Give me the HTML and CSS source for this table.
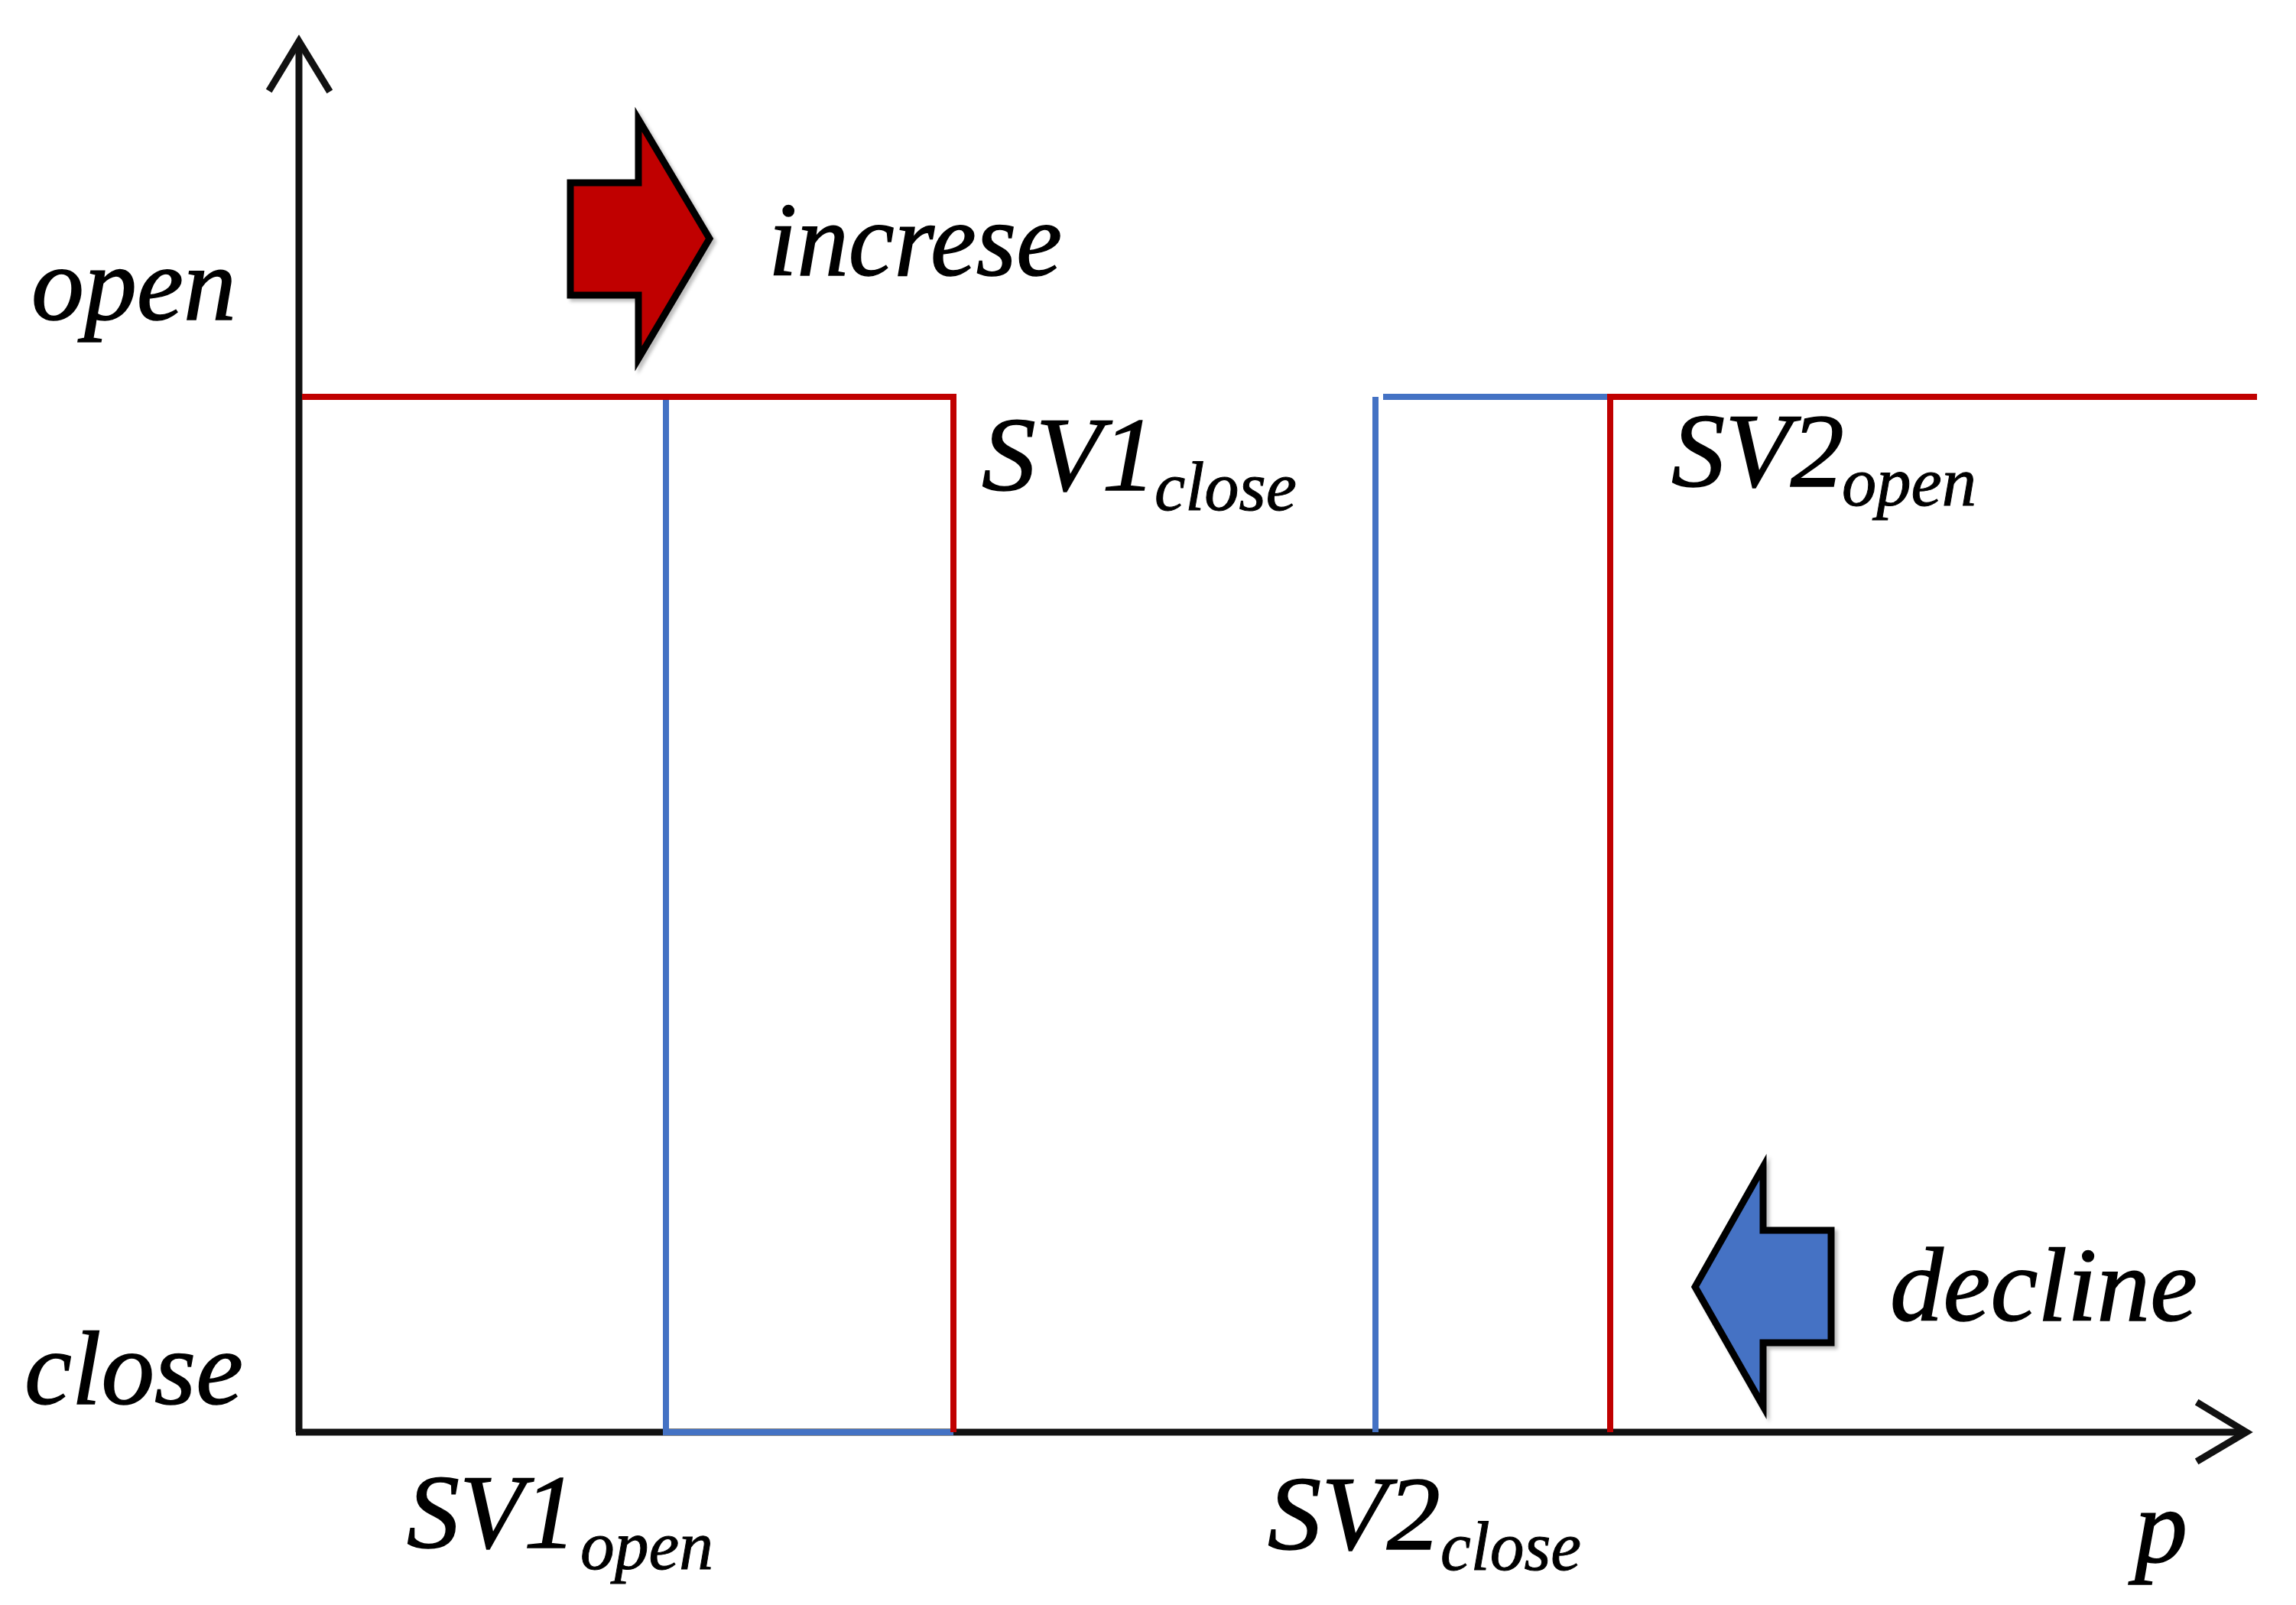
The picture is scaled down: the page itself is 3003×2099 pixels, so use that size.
FILE: index.html
```html
<!DOCTYPE html>
<html lang="en">
<head>
<meta charset="utf-8">
<title>Valve switching diagram</title>
<link rel="stylesheet" href="styles.css">
</head>
<body>
<main class="canvas">
<svg class="chart" viewBox="0 0 3003 2099" width="3003" height="2099" xmlns="http://www.w3.org/2000/svg">
  <defs>
    <filter id="shade" x="-10%" y="-10%" width="130%" height="130%">
      <feDropShadow dx="4" dy="4" stdDeviation="2" flood-color="#000000" flood-opacity="0.25"/>
    </filter>
  </defs>
  <!-- axes -->
  <line class="axis" x1="391" y1="1873" x2="391" y2="54"/>
  <polyline class="axis-head" points="354,115 391,54 429,116"/>
  <line class="axis" x1="387" y1="1873" x2="2938" y2="1873"/>
  <polyline class="axis-head" points="2877,1836 2938,1873 2877,1909"/>

  <!-- blue (decline) path -->
  <polyline class="blue" points="871,519 871,1873 1247,1873"/>
  <line class="blue" x1="1799" y1="519" x2="1799" y2="1873"/>
  <line class="blue" x1="1809" y1="519" x2="2106" y2="519"/>

  <!-- red (increase) path -->
  <polyline class="red" points="395,519 1247,519 1247,1873"/>
  <polyline class="red" points="2106,1873 2106,519 2952,519"/>

  <!-- direction arrows -->
  <polygon class="arrow-red" filter="url(#shade)" points="746,239 835,239 835,156 928,312 835,469 835,386 746,386"/>
  <polygon class="arrow-blue" filter="url(#shade)" points="2395,1609 2306,1609 2306,1526 2217,1683 2306,1839 2306,1756 2395,1756"/>

  <!-- labels -->
  <text class="lbl" x="41" y="418" textLength="268" lengthAdjust="spacingAndGlyphs">open</text>
  <text class="lbl" x="32" y="1836" textLength="286" lengthAdjust="spacingAndGlyphs">close</text>
  <text class="lbl" x="1005" y="360" textLength="384" lengthAdjust="spacingAndGlyphs">increse</text>
  <text class="lbl" x="2472" y="1727" textLength="402" lengthAdjust="spacingAndGlyphs">decline</text>
  <text class="lbl" x="2792" y="2043">p</text>

  <text class="lbl" x="1284" y="641" textLength="228" lengthAdjust="spacingAndGlyphs">SV1</text>
  <text class="lbl sub" x="1510" y="667" textLength="186" lengthAdjust="spacingAndGlyphs">close</text>

  <text class="lbl" x="2186" y="636" textLength="226" lengthAdjust="spacingAndGlyphs">SV2</text>
  <text class="lbl sub" x="2409" y="661" textLength="176" lengthAdjust="spacingAndGlyphs">open</text>

  <text class="lbl" x="532" y="2024" textLength="222" lengthAdjust="spacingAndGlyphs">SV1</text>
  <text class="lbl sub" x="759" y="2052" textLength="174" lengthAdjust="spacingAndGlyphs">open</text>

  <text class="lbl" x="1658" y="2026" textLength="226" lengthAdjust="spacingAndGlyphs">SV2</text>
  <text class="lbl sub" x="1884" y="2053" textLength="184" lengthAdjust="spacingAndGlyphs">close</text>
</svg>
</main>
</body>
</html>
```

FILE: styles.css
```css
html, body {
  margin: 0;
  padding: 0;
  background: #ffffff;
}

.canvas {
  width: 3003px;
  height: 2099px;
  overflow: hidden;
}

.chart {
  display: block;
}

.axis {
  stroke: #111111;
  stroke-width: 9;
  fill: none;
}

.axis-head {
  stroke: #111111;
  stroke-width: 9;
  fill: none;
  stroke-linejoin: miter;
  stroke-linecap: square;
}

.red {
  stroke: #c00000;
  stroke-width: 8;
  fill: none;
  stroke-linejoin: miter;
}

.blue {
  stroke: #4472c4;
  stroke-width: 8;
  fill: none;
  stroke-linejoin: miter;
}

.arrow-red {
  fill: #c00000;
  stroke: #000000;
  stroke-width: 9;
  stroke-linejoin: miter;
}

.arrow-blue {
  fill: #4472c4;
  stroke: #000000;
  stroke-width: 9;
  stroke-linejoin: miter;
}

.lbl {
  font-family: "Liberation Serif", "Times New Roman", serif;
  font-style: italic;
  font-size: 138px;
  fill: #000000;
  stroke: #000000;
  stroke-width: 1.5;
}

.sub {
  font-size: 90px;
  stroke-width: 1;
}
```
